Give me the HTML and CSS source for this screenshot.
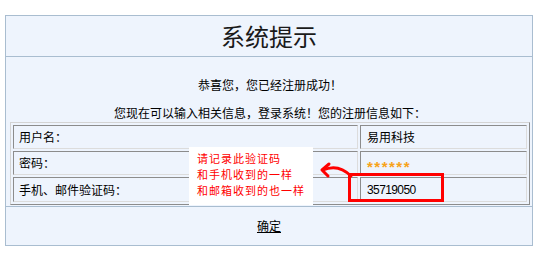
FILE: index.html
```html
<!DOCTYPE html>
<html lang="zh-CN">
<head>
<meta charset="utf-8">
<title>系统提示</title>
<link rel="stylesheet" href="styles.css">
</head>
<body>
<div class="box">
  <div class="title">系统提示</div>
  <div class="content">
    <p class="msg1">恭喜您，您已经注册成功！</p>
    <p class="msg2">您现在可以输入相关信息，登录系统！您的注册信息如下：</p>
    <table class="info">
      <tr><td class="label">用户名：</td><td class="value">易用科技</td></tr>
      <tr><td class="label">密码：</td><td class="value"><span class="stars">******</span></td></tr>
      <tr><td class="label">手机、邮件验证码：</td><td class="value"><span class="code">35719050</span></td></tr>
    </table>
  </div>
  <div class="footer"><a href="#" class="ok">确定</a></div>

  <div class="note">
    <div class="note-line">请记录此验证码</div>
    <div class="note-line">和手机收到的一样</div>
    <div class="note-line">和邮箱收到的也一样</div>
  </div>
  <div class="mark"></div>
  <svg class="arrow" width="40" height="22" viewBox="0 0 40 22">
    <path d="M7 10 C 16 6, 26 7, 35 16" fill="none" stroke="#ff0000" stroke-width="3" stroke-linecap="round"/>
    <path d="M13 4 L6 10 L12 16" fill="none" stroke="#ff0000" stroke-width="3" stroke-linecap="round" stroke-linejoin="round"/>
  </svg>
</div>
</body>
</html>
```

FILE: styles.css
```css
html, body {
  margin: 0;
  padding: 0;
  background: #ffffff;
}

body {
  font-family: "Noto Sans CJK SC", "Liberation Sans", sans-serif;
  font-size: 12px;
  color: #000;
  padding-top: 15px;
}

.box {
  position: relative;
  margin-left: 5px;
  width: 526px;
  border: 1px solid #a9bdd0;
  background: #eef4fd;
}

.title {
  height: 40px;
  line-height: 40px;
  text-align: center;
  font-size: 24px;
  color: #1a1a1a;
  border-bottom: 1px solid #a9bdd0;
}

.content {
  padding: 14px 2px 1px 4px;
}

.content p {
  margin: 0;
  text-align: center;
}

.msg1 {
  line-height: 28px;
}

.msg2 {
  margin-top: 4px !important;
  line-height: 19px;
}

.info {
  width: 520px;
  border-collapse: separate;
  border-spacing: 2px;
  border: 1px solid;
  border-color: #d4d4d4 #8c8c8c #8c8c8c #d4d4d4;
}

.info td {
  padding: 0 5px;
  line-height: 22px;
  border: 1px solid;
  border-color: #8c8c8c #dcdcdc #dcdcdc #8c8c8c;
  white-space: nowrap;
}

.info td.label {
  width: 333px;
}

.info td.value {
  padding-left: 6px;
}

.stars {
  color: #f7a319;
  font-family: "Liberation Sans", sans-serif;
  font-weight: bold;
  font-size: 15px;
  letter-spacing: 1.5px;
  vertical-align: -4px;
  line-height: 14px;
}

.code {
  font-family: "Liberation Sans", sans-serif;
  font-size: 12px;
  letter-spacing: -0.6px;
}

.footer {
  height: 38px;
  line-height: 38px;
  text-align: center;
  border-top: 1px solid #a9bdd0;
}

.ok {
  color: #000;
  text-decoration: underline;
}

.note {
  position: absolute;
  left: 183px;
  top: 131px;
  width: 116px;
  height: 55px;
  padding: 3px 0 0 8px;
  background: #ffffff;
  color: #ff0000;
  font-size: 11px;
  letter-spacing: 1px;
  white-space: nowrap;
}

.note-line {
  height: 16px;
  line-height: 16px;
}

.mark {
  position: absolute;
  left: 342px;
  top: 157px;
  width: 90px;
  height: 23px;
  border: 3px solid #ff0000;
}

.arrow {
  position: absolute;
  left: 310px;
  top: 144px;
}
```
